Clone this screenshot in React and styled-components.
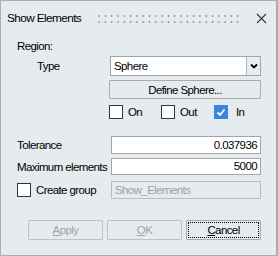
import React, { useState } from 'react'
import styled, { createGlobalStyle } from 'styled-components'

const Global = createGlobalStyle`
  html, body { margin: 0; padding: 0; background: #e6ebef; }
  body {
    font-family: "Liberation Sans", Arial, sans-serif;
    font-size: 11.5px;
    letter-spacing: -0.6px;
    color: #000;
  }
  * { box-sizing: border-box; }
`

const Win = styled.div`
  width: 278px;
  height: 256px;
  border: 1px solid #a7aeb4;
  border-right-width: 2px;
  background: #e6ebef;
  display: flex;
  flex-direction: column;
`

const TitleBar = styled.div`
  height: 34px;
  display: flex;
  align-items: center;
  padding: 0 9px 0 6px;
  gap: 15px;
`

const Title = styled.span`
  font-size: 11.8px;
`

const Grip = styled.div`
  flex: 1;
  height: 9px;
  margin-top: 1px;
  background-image: radial-gradient(circle, #8a9097 0.8px, transparent 1.1px);
  background-size: 6.3px 6px;
  background-position: 0 -1px;
`

const Body = styled.div`
  padding: 3px 15px 0 16px;
  display: flex;
  flex-direction: column;
`

const Heading = styled.div`
  height: 16px;
  line-height: 16px;
  margin-bottom: 2px;
`

const Row = styled.div`
  display: flex;
  align-items: center;
  height: ${p => p.h || 20}px;
  margin-top: ${p => p.mt || 0}px;
  padding-left: ${p => p.indent || 0}px;
`

const Label = styled.span`
  width: ${p => p.w}px;
  flex-shrink: 0;
  white-space: nowrap;
`

const Select = styled.div`
  flex: 1;
  height: 20px;
  display: flex;
  border: 1px solid #a3a6a9;
  background: #fff;
`

const SelectText = styled.span`
  flex: 1;
  padding-left: 3px;
  line-height: 18px;
`

const Caret = styled.span`
  width: 14px;
  border-left: 1px solid #b5b9bd;
  background: #e9edf0;
  display: flex;
  align-items: center;
  justify-content: center;
`

const Button = styled.button`
  font: inherit;
  letter-spacing: -0.6px;
  height: ${p => p.h || 20}px;
  width: ${p => (p.w ? p.w + 'px' : '100%')};
  background: #e6ebef;
  border: 1px solid ${p => (p.disabled ? '#bfc3c7' : '#a9adb1')};
  color: ${p => (p.disabled ? '#a3a3a3' : '#000')};
  padding: 0;
  position: relative;
  border-radius: 1px;
  &::after {
    content: '';
    display: ${p => (p.focus ? 'block' : 'none')};
    position: absolute;
    inset: 1px;
    border: 1px dotted #000;
  }
  u { text-decoration: underline; text-underline-offset: 1px; }
`

const Checks = styled.div`
  display: flex;
  align-items: center;
  margin-top: 6px;
  padding-left: 92px;
  height: 14px;
`

const CheckWrap = styled.label`
  display: flex;
  align-items: center;
  width: ${p => p.w || 'auto'};
  gap: ${p => p.gap || 5}px;
`

const Box = styled.span`
  width: 14px;
  height: 14px;
  border: 1px solid ${p => (p.on ? '#3a85de' : '#333')};
  background: ${p => (p.on ? '#3a85de' : '#fff')};
  display: flex;
  align-items: center;
  justify-content: center;
`

const Input = styled.div`
  flex: 1;
  height: ${p => p.h || 18}px;
  border: 1px solid ${p => (p.disabled ? '#b9bdc1' : '#a3a6a9')};
  background: ${p => (p.disabled ? '#e6ebef' : '#fff')};
  color: ${p => (p.disabled ? '#a0a0a0' : '#000')};
  text-align: ${p => (p.right ? 'right' : 'left')};
  padding: 0 3px;
  line-height: ${p => (p.h || 18) - 2}px;
`

const Footer = styled.div`
  display: flex;
  justify-content: flex-end;
  gap: 4px;
  margin-top: auto;
  padding: 0 15px 15px 0;
`

function Check({ on, label, w, gap }) {
  return (
    <CheckWrap w={w} gap={gap}>
      <Box on={on}>
        {on && (
          <svg width="10" height="9" viewBox="0 0 10 9">
            <path d="M1.5 4.5 L4 7 L8.5 1.5" fill="none" stroke="#fff" strokeWidth="1.8" />
          </svg>
        )}
      </Box>
      <span>{label}</span>
    </CheckWrap>
  )
}

export default function App() {
  const [type] = useState('Sphere')
  return (
    <Win>
      <Global />
      <TitleBar>
        <Title>Show Elements</Title>
        <Grip />
        <svg width="11" height="11" viewBox="0 0 11 11">
          <path d="M1 1 L10 10 M10 1 L1 10" stroke="#333" strokeWidth="1.1" />
        </svg>
      </TitleBar>
      <Body>
        <Heading>Region:</Heading>
        <Row indent={20}>
          <Label w={73}>Type</Label>
          <Select>
            <SelectText>{type}</SelectText>
            <Caret>
              <svg width="8" height="6" viewBox="0 0 8 6">
                <path d="M1 1.5 L4 4.5 L7 1.5" fill="none" stroke="#000" strokeWidth="1.8" />
              </svg>
            </Caret>
          </Select>
        </Row>
        <Row mt={4} h={19} indent={92}>
          <Button h={19}>Define Sphere...</Button>
        </Row>
        <Checks>
          <Check label="On" w="52px" />
          <Check label="Out" w="53px" />
          <Check label="In" on gap={8} />
        </Checks>
        <Row mt={17} h={18}>
          <Label w={94}>Tolerance</Label>
          <Input right>0.037936</Input>
        </Row>
        <Row mt={4} h={17}>
          <Label w={94}>Maximum elements</Label>
          <Input right h={17}>5000</Input>
        </Row>
        <Row mt={6} h={18}>
          <Label w={94}>
            <Check label="Create group" />
          </Label>
          <Input disabled>Show_Elements</Input>
        </Row>
      </Body>
      <Footer>
        <Button w={75} disabled><u>A</u>pply</Button>
        <Button w={75} disabled><u>O</u>K</Button>
        <Button w={75} focus><u>C</u>ancel</Button>
      </Footer>
    </Win>
  )
}
